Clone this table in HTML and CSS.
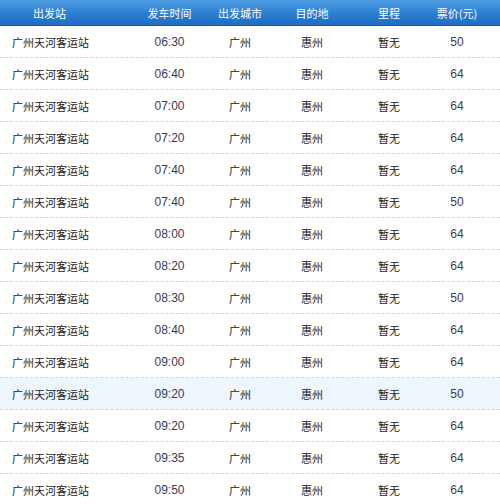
FILE: index.html
```
<!DOCTYPE html>
<html lang="zh">
<head>
<meta charset="utf-8">
<link rel="stylesheet" href="styles.css">
</head>
<body>
<div class="table">
  <div class="row head">
    <div class="c c1">出发站</div><div class="c">发车时间</div><div class="c">出发城市</div><div class="c">目的地</div><div class="c">里程</div><div class="c">票价(元)</div>
  </div>
  <div class="row"><div class="c c1">广州天河客运站</div><div class="c num">06:30</div><div class="c">广州</div><div class="c">惠州</div><div class="c">暂无</div><div class="c num">50</div></div>
  <div class="row"><div class="c c1">广州天河客运站</div><div class="c num">06:40</div><div class="c">广州</div><div class="c">惠州</div><div class="c">暂无</div><div class="c num">64</div></div>
  <div class="row"><div class="c c1">广州天河客运站</div><div class="c num">07:00</div><div class="c">广州</div><div class="c">惠州</div><div class="c">暂无</div><div class="c num">64</div></div>
  <div class="row"><div class="c c1">广州天河客运站</div><div class="c num">07:20</div><div class="c">广州</div><div class="c">惠州</div><div class="c">暂无</div><div class="c num">64</div></div>
  <div class="row"><div class="c c1">广州天河客运站</div><div class="c num">07:40</div><div class="c">广州</div><div class="c">惠州</div><div class="c">暂无</div><div class="c num">64</div></div>
  <div class="row"><div class="c c1">广州天河客运站</div><div class="c num">07:40</div><div class="c">广州</div><div class="c">惠州</div><div class="c">暂无</div><div class="c num">50</div></div>
  <div class="row"><div class="c c1">广州天河客运站</div><div class="c num">08:00</div><div class="c">广州</div><div class="c">惠州</div><div class="c">暂无</div><div class="c num">64</div></div>
  <div class="row"><div class="c c1">广州天河客运站</div><div class="c num">08:20</div><div class="c">广州</div><div class="c">惠州</div><div class="c">暂无</div><div class="c num">64</div></div>
  <div class="row"><div class="c c1">广州天河客运站</div><div class="c num">08:30</div><div class="c">广州</div><div class="c">惠州</div><div class="c">暂无</div><div class="c num">50</div></div>
  <div class="row"><div class="c c1">广州天河客运站</div><div class="c num">08:40</div><div class="c">广州</div><div class="c">惠州</div><div class="c">暂无</div><div class="c num">64</div></div>
  <div class="row"><div class="c c1">广州天河客运站</div><div class="c num">09:00</div><div class="c">广州</div><div class="c">惠州</div><div class="c">暂无</div><div class="c num">64</div></div>
  <div class="row hl"><div class="c c1">广州天河客运站</div><div class="c num">09:20</div><div class="c">广州</div><div class="c">惠州</div><div class="c">暂无</div><div class="c num">50</div></div>
  <div class="row"><div class="c c1">广州天河客运站</div><div class="c num">09:20</div><div class="c">广州</div><div class="c">惠州</div><div class="c">暂无</div><div class="c num">64</div></div>
  <div class="row"><div class="c c1">广州天河客运站</div><div class="c num">09:35</div><div class="c">广州</div><div class="c">惠州</div><div class="c">暂无</div><div class="c num">64</div></div>
  <div class="row"><div class="c c1">广州天河客运站</div><div class="c num">09:50</div><div class="c">广州</div><div class="c">惠州</div><div class="c">暂无</div><div class="c num">64</div></div>
</div>
</body>
</html>
```
FILE: styles.css
```
html, body {
  margin: 0;
  padding: 0;
  background: #fff;
}
body {
  font-family: "Noto Sans CJK SC", "Liberation Sans", sans-serif;
  font-size: 11px;
  color: #222;
  overflow: hidden;
}
.table {
  width: 500px;
}
.row {
  display: grid;
  grid-template-columns: 134px 71px 70px 74px 80px 56px 15px;
  height: 32px;
  align-items: center;
  border-bottom: 1px dashed #d4d4d4;
  box-sizing: border-box;
}
.row.head {
  height: 26px;
  background: linear-gradient(#4c9de2, #2a7cce 60%, #1e6dc0);
  border-bottom: 1px solid #1458a0;
  color: #fff;
  font-size: 11px;
}
.row.hl {
  background: #edf5fd;
}
.c {
  text-align: center;
  white-space: nowrap;
}
.c1 {
  text-align: left;
  padding-left: 12px;
}
.head .c1 {
  padding-left: 33px;
}
.num {
  font-family: "Liberation Sans", Arial, sans-serif;
  font-size: 12px;
  color: #3a3a50;
}
```
